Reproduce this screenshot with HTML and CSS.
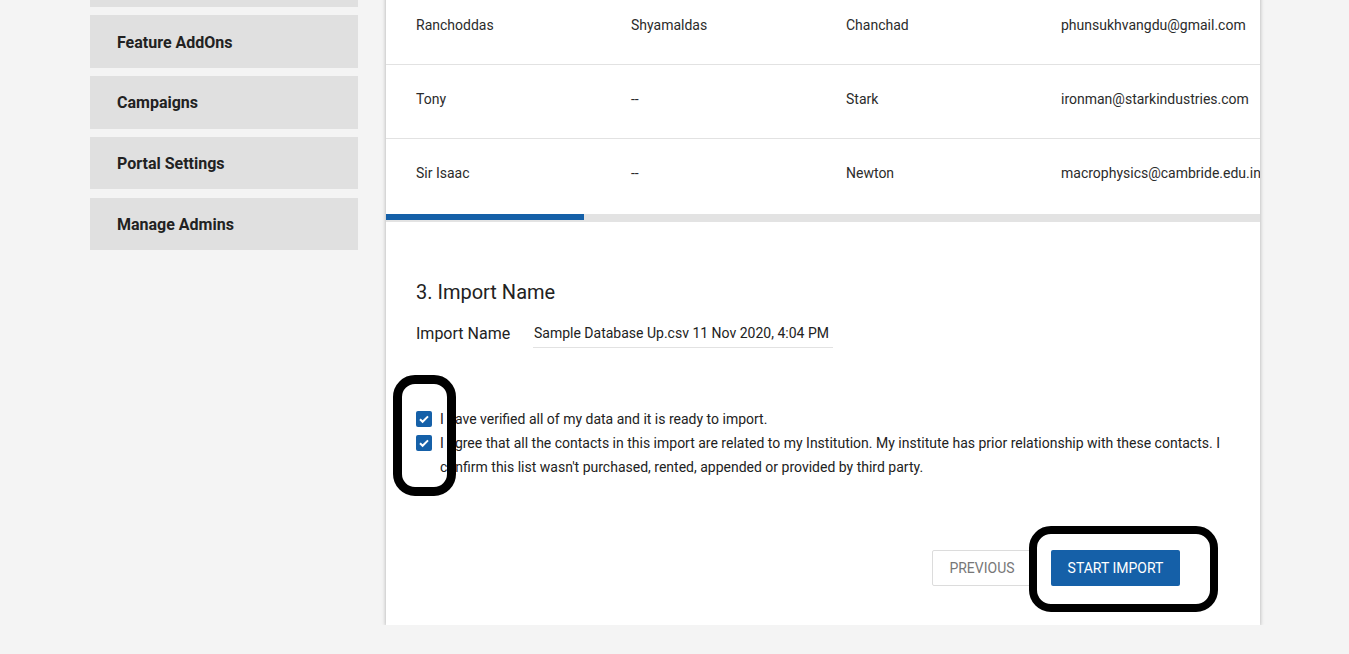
FILE: index.html
```html
<!DOCTYPE html>
<html>
<head>
<meta charset="utf-8">
<link rel="stylesheet" href="styles.css">
</head>
<body>
<div class="page">
  <aside class="sidebar">
    <div class="nav-item"></div>
    <div class="nav-item">Feature AddOns</div>
    <div class="nav-item">Campaigns</div>
    <div class="nav-item">Portal Settings</div>
    <div class="nav-item">Manage Admins</div>
  </aside>
  <main class="card">
    <div class="table">
      <div class="row"><span>Ranchoddas</span><span>Shyamaldas</span><span>Chanchad</span><span>phunsukhvangdu@gmail.com</span></div>
      <div class="row"><span>Tony</span><span>--</span><span>Stark</span><span>ironman@starkindustries.com</span></div>
      <div class="row last"><span>Sir Isaac</span><span>--</span><span>Newton</span><span>macrophysics@cambride.edu.in</span></div>
    </div>
    <div class="scrollbar"><div class="thumb"></div></div>
    <section class="section">
      <h2 class="title">3. Import Name</h2>
      <div class="field">
        <label class="label">Import Name</label>
        <div class="input">Sample Database Up.csv 11 Nov 2020, 4:04 PM</div>
      </div>
      <div class="checks">
        <div class="check">
          <span class="box"><svg viewBox="0 0 16 16" width="16" height="16"><path d="M4 8.3l2.6 2.5L12 5.4" fill="none" stroke="#fff" stroke-width="2"/></svg></span>
          <span class="ctext">I have verified all of my data and it is ready to import.</span>
        </div>
        <div class="check">
          <span class="box"><svg viewBox="0 0 16 16" width="16" height="16"><path d="M4 8.3l2.6 2.5L12 5.4" fill="none" stroke="#fff" stroke-width="2"/></svg></span>
          <span class="ctext">I agree that all the contacts in this import are related to my Institution. My institute has prior relationship with these contacts. I confirm this list wasn't purchased, rented, appended or provided by third party.</span>
        </div>
      </div>
      <div class="actions">
        <button class="btn btn-prev">PREVIOUS</button>
        <button class="btn btn-start">START IMPORT</button>
      </div>
    </section>
  </main>
</div>
<div class="mark mark-checks"></div>
<div class="mark mark-start"></div>
</body>
</html>
```

FILE: styles.css
```css
html, body {
  margin: 0;
  padding: 0;
  background: #f4f4f4;
  font-family: Roboto, "Liberation Sans", Arial, sans-serif;
  color: #222;
  overflow: hidden;
}
.page {
  display: flex;
  align-items: flex-start;
  gap: 28px;
  padding-left: 90px;
}
.sidebar {
  width: 268px;
  display: flex;
  flex-direction: column;
  gap: 8.3px;
  margin-top: -45.5px;
}
.nav-item {
  height: 52.5px;
  background: #e0e0e0;
  display: flex;
  align-items: center;
  padding-left: 27px;
  padding-top: 1px;
  font-size: 16px;
  font-weight: 700;
  color: #222;
  box-sizing: border-box;
}
.card {
  width: 874px;
  background: #fff;
  margin-top: -9px;
  box-shadow: 0 1px 4px rgba(0,0,0,0.3);
  padding-bottom: 39px;
}
.row {
  height: 74px;
  box-sizing: border-box;
  padding: 24px 0 0 30px;
  display: grid;
  grid-template-columns: 215px 215px 215px 1fr;
  font-size: 14px;
  line-height: 20px;
  color: #2b2b2b;
  border-bottom: 1px solid #e2e2e2;
  white-space: nowrap;
  overflow: hidden;
}
.row.last {
  border-bottom: none;
}
.scrollbar {
  height: 8px;
  background: #e3e3e3;
}
.thumb {
  width: 198px;
  height: 6px;
  margin-top: 1px;
  background: #1560a8;
}
.section {
  padding: 0 30px;
}
.title {
  margin: 58px 0 0;
  font-size: 20px;
  line-height: 24px;
  font-weight: 400;
  color: #222;
}
.field {
  display: flex;
  align-items: center;
  margin-top: 15px;
}
.label {
  width: 117px;
  font-size: 16px;
  color: #222;
}
.input {
  width: 300px;
  font-size: 14px;
  line-height: 20px;
  padding: 4px 0 4px 1px;
  border-bottom: 1px solid #e2e2e2;
  box-sizing: border-box;
  color: #222;
}
.checks {
  margin-top: 59px;
}
.check {
  display: flex;
  align-items: flex-start;
  gap: 8px;
}
.box {
  flex: none;
  width: 16px;
  height: 16px;
  margin-top: 4px;
  background: #1560a8;
  border-radius: 2px;
  display: block;
}
.box svg {
  display: block;
}
.ctext {
  font-size: 14px;
  line-height: 24px;
  color: #222;
}
.actions {
  display: flex;
  justify-content: flex-end;
  gap: 19px;
  margin-top: 71px;
  padding-right: 50px;
}
.btn {
  height: 36px;
  font-family: Roboto, "Liberation Sans", Arial, sans-serif;
  font-size: 14px;
  border-radius: 2px;
  cursor: pointer;
}
.btn-prev {
  width: 100px;
  background: #fff;
  border: 1px solid #dcdcdc;
  color: #777;
}
.btn-start {
  width: 129px;
  background: #1560a8;
  border: none;
  color: #fff;
}
.mark {
  position: absolute;
  border: 9px solid #000;
  border-radius: 22px;
  box-sizing: border-box;
}
.mark-checks {
  left: 393px;
  top: 375px;
  width: 63px;
  height: 121px;
}
.mark-start {
  left: 1029px;
  top: 526px;
  width: 189px;
  height: 86px;
  border-width: 8px;
}
```
